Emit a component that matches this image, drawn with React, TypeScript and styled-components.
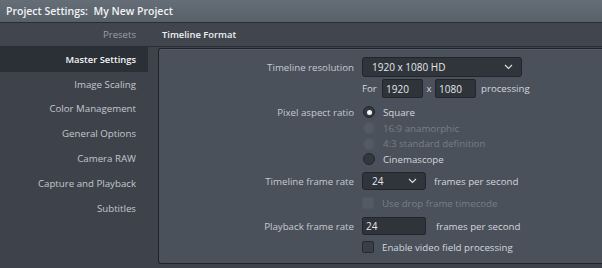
import React from 'react';
import styled, { createGlobalStyle } from 'styled-components';

const GlobalStyle = createGlobalStyle`
  html, body {
    margin: 0;
    padding: 0;
    background: #3e434b;
    overflow: hidden;
  }
  body {
    font-family: "Open Sans", "Liberation Sans", sans-serif;
  }
`;

const Window = styled.div`
  width: 602px;
  height: 268px;
  display: flex;
  flex-direction: column;
  background: #3e434b;
  overflow: hidden;
`;

const TitleBar = styled.div`
  height: 22px;
  flex-shrink: 0;
  display: flex;
  align-items: center;
  padding-left: 6px;
  background: linear-gradient(180deg, #656d77 0%, #58606a 100%);
  color: #f1f2f3;
  font-size: 10.5px;
  font-weight: 600;
  white-space: pre;
`;

const HeaderRow = styled.div`
  height: 23px;
  flex-shrink: 0;
  display: grid;
  grid-template-columns: 148px 1fr;
  align-items: center;
  background: #40454e;
  border-top: 1px solid #2a2e34;
  border-bottom: 1px solid #2a2e34;
  font-size: 9.6px;
`;

const HeaderCell = styled.div<{ $active?: boolean }>`
  color: ${p => (p.$active ? '#eef0f2' : '#9aa0a8')};
  font-weight: ${p => (p.$active ? 600 : 400)};
  font-size: ${p => (p.$active ? 9.4 : 9.6)}px;
  text-align: ${p => (p.$active ? 'left' : 'right')};
  padding: ${p => (p.$active ? '0 0 0 14px' : '0 12px 0 0')};
`;

const Body = styled.div`
  flex: 1;
  display: flex;
  min-height: 0;
`;

const Sidebar = styled.nav`
  width: 148px;
  flex-shrink: 0;
  display: flex;
  flex-direction: column;
`;

const SideItem = styled.div<{ $active?: boolean }>`
  height: 24.8px;
  display: flex;
  align-items: center;
  justify-content: flex-end;
  padding-right: 12px;
  font-size: ${p => (p.$active ? 9.4 : 9.7)}px;
  color: ${p => (p.$active ? '#f2f3f5' : '#c3c7cd')};
  font-weight: ${p => (p.$active ? 600 : 400)};
  background: ${p => (p.$active ? '#2b2f36' : 'transparent')};
`;

const Main = styled.div`
  flex: 1;
  padding: 1px 0 4px 10px;
  display: flex;
  min-width: 0;
`;

const Panel = styled.div`
  flex: 1;
  background: #4a515b;
  border: 1px solid #20242a;
  border-right: none;
  border-radius: 3px 0 0 3px;
  box-shadow: inset 0 1px 0 #555c66;
  padding-top: 8px;
  display: flex;
  flex-direction: column;
`;

const FieldRow = styled.div<{ $h: number; $mt?: number }>`
  height: ${p => p.$h}px;
  margin-top: ${p => p.$mt ?? 0}px;
  display: grid;
  grid-template-columns: 195px 1fr;
  column-gap: 8px;
  align-items: center;
  font-size: 9.7px;
`;

const Label = styled.div`
  text-align: right;
  color: #c6cacf;
  white-space: nowrap;
`;

const Controls = styled.div<{ $gap?: number }>`
  display: flex;
  align-items: center;
  gap: ${p => p.$gap ?? 8}px;
  height: 100%;
  white-space: nowrap;
`;

const Text = styled.span<{ $disabled?: boolean; $pl?: number }>`
  color: ${p => (p.$disabled ? '#777e87' : '#d4d7db')};
  padding-left: ${p => p.$pl ?? 0}px;
`;

const Select = styled.div<{ $w: number }>`
  width: ${p => p.$w}px;
  height: 100%;
  box-sizing: border-box;
  display: flex;
  align-items: center;
  justify-content: space-between;
  padding: 0 8px 0 9px;
  background: #30353c;
  border: 1px solid #22262c;
  border-radius: 3px;
  color: #e4e6e9;
  font-size: 10px;
`;

const Input = styled.div<{ $w: number }>`
  width: ${p => p.$w}px;
  height: 100%;
  box-sizing: border-box;
  display: flex;
  align-items: center;
  padding-left: 3px;
  background: #2f343b;
  border: 1px solid #22262c;
  border-radius: 2px;
  color: #e4e6e9;
  font-size: 10px;
`;

const Radio = styled.span<{ $state: 'on' | 'off' | 'disabled' }>`
  width: 12px;
  height: 12px;
  margin-left: 1px;
  border-radius: 50%;
  box-sizing: border-box;
  display: flex;
  align-items: center;
  justify-content: center;
  background: ${p => (p.$state === 'disabled' ? '#535a64' : '#33383f')};
  border: 1px solid ${p => (p.$state === 'disabled' ? '#4f565f' : '#23272d')};
  &::after {
    content: '';
    display: ${p => (p.$state === 'on' ? 'block' : 'none')};
    width: 5px;
    height: 5px;
    border-radius: 50%;
    background: #f4f5f6;
  }
`;

const Check = styled.span<{ $disabled?: boolean }>`
  width: 12px;
  height: 12px;
  box-sizing: border-box;
  border-radius: 2px;
  background: ${p => (p.$disabled ? '#535a64' : '#3a3f47')};
  border: 1px solid ${p => (p.$disabled ? '#4f565f' : '#262a30')};
`;

const Chevron = () => (
  <svg width="9" height="6" viewBox="0 0 9 6">
    <path d="M1 1 L4.5 4.5 L8 1" fill="none" stroke="#d8dbdf" strokeWidth="1.2" />
  </svg>
);

const sideItems = [
  'Master Settings',
  'Image Scaling',
  'Color Management',
  'General Options',
  'Camera RAW',
  'Capture and Playback',
  'Subtitles',
];

export default function App() {
  return (
    <>
      <GlobalStyle />
      <Window>
        <TitleBar>Project Settings:  My New Project</TitleBar>
        <HeaderRow>
          <HeaderCell>Presets</HeaderCell>
          <HeaderCell $active>Timeline Format</HeaderCell>
        </HeaderRow>
        <Body>
          <Sidebar>
            {sideItems.map((s, i) => (
              <SideItem key={s} $active={i === 0}>
                {s}
              </SideItem>
            ))}
          </Sidebar>
          <Main>
            <Panel>
              <FieldRow $h={20}>
                <Label>Timeline resolution</Label>
                <Controls>
                  <Select $w={160}>
                    <span>1920 x 1080 HD</span>
                    <Chevron />
                  </Select>
                </Controls>
              </FieldRow>
              <FieldRow $h={19} $mt={2}>
                <div />
                <Controls $gap={0}>
                  <Text style={{ width: 20 }}>For</Text>
                  <Input $w={41}>1920</Input>
                  <Text style={{ width: 12, textAlign: 'center' }}>x</Text>
                  <Input $w={41}>1080</Input>
                  <Text $pl={5}>processing</Text>
                </Controls>
              </FieldRow>
              <FieldRow $h={16} $mt={6}>
                <Label>Pixel aspect ratio</Label>
                <Controls>
                  <Radio $state="on" />
                  <Text>Square</Text>
                </Controls>
              </FieldRow>
              <FieldRow $h={16}>
                <div />
                <Controls>
                  <Radio $state="disabled" />
                  <Text $disabled>16:9 anamorphic</Text>
                </Controls>
              </FieldRow>
              <FieldRow $h={15}>
                <div />
                <Controls>
                  <Radio $state="disabled" />
                  <Text $disabled>4:3 standard definition</Text>
                </Controls>
              </FieldRow>
              <FieldRow $h={16}>
                <div />
                <Controls>
                  <Radio $state="off" />
                  <Text>Cinemascope</Text>
                </Controls>
              </FieldRow>
              <FieldRow $h={18} $mt={5}>
                <Label>Timeline frame rate</Label>
                <Controls>
                  <Select $w={64}>
                    <span>24</span>
                    <Chevron />
                  </Select>
                  <Text>frames per second</Text>
                </Controls>
              </FieldRow>
              <FieldRow $h={16} $mt={5}>
                <div />
                <Controls>
                  <Check $disabled />
                  <Text $disabled>Use drop frame timecode</Text>
                </Controls>
              </FieldRow>
              <FieldRow $h={18} $mt={6}>
                <Label>Playback frame rate</Label>
                <Controls $gap={10}>
                  <Input $w={64}>24</Input>
                  <Text>frames per second</Text>
                </Controls>
              </FieldRow>
              <FieldRow $h={16} $mt={4}>
                <div />
                <Controls>
                  <Check />
                  <Text>Enable video field processing</Text>
                </Controls>
              </FieldRow>
            </Panel>
          </Main>
        </Body>
      </Window>
    </>
  );
}
